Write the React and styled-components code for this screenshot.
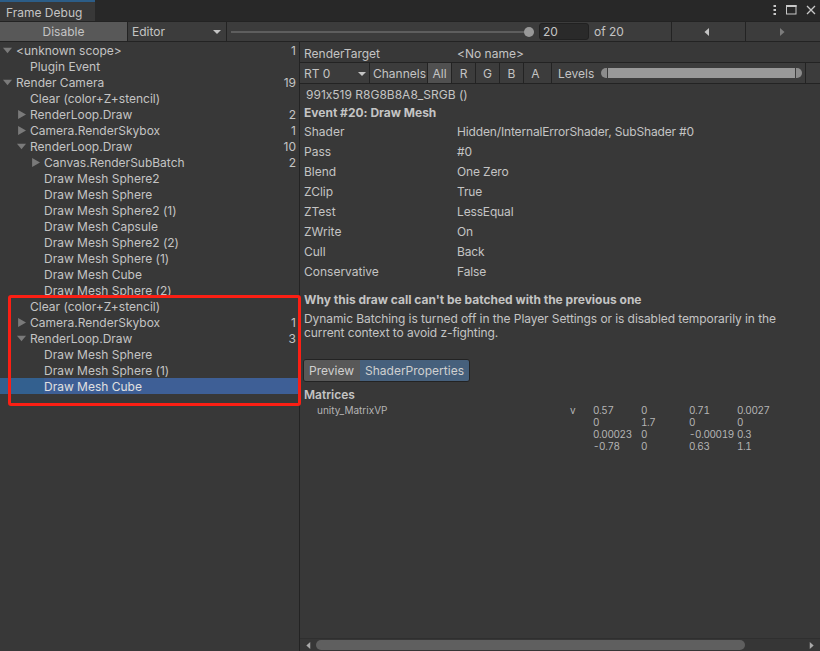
import React from "react";
import styled, { createGlobalStyle } from "styled-components";

const tree = [
  { label: "<unknown scope>", depth: 0, arrow: "down", count: 1 },
  { label: "Plugin Event", depth: 1 },
  { label: "Render Camera", depth: 0, arrow: "down", count: 19 },
  { label: "Clear (color+Z+stencil)", depth: 1 },
  { label: "RenderLoop.Draw", depth: 1, arrow: "right", count: 2 },
  { label: "Camera.RenderSkybox", depth: 1, arrow: "right", count: 1 },
  { label: "RenderLoop.Draw", depth: 1, arrow: "down", count: 10 },
  { label: "Canvas.RenderSubBatch", depth: 2, arrow: "right", count: 2 },
  { label: "Draw Mesh Sphere2", depth: 2 },
  { label: "Draw Mesh Sphere", depth: 2 },
  { label: "Draw Mesh Sphere2 (1)", depth: 2 },
  { label: "Draw Mesh Capsule", depth: 2 },
  { label: "Draw Mesh Sphere2 (2)", depth: 2 },
  { label: "Draw Mesh Sphere (1)", depth: 2 },
  { label: "Draw Mesh Cube", depth: 2 },
  { label: "Draw Mesh Sphere (2)", depth: 2 },
  { label: "Clear (color+Z+stencil)", depth: 1 },
  { label: "Camera.RenderSkybox", depth: 1, arrow: "right", count: 1 },
  { label: "RenderLoop.Draw", depth: 1, arrow: "down", count: 3 },
  { label: "Draw Mesh Sphere", depth: 2 },
  { label: "Draw Mesh Sphere (1)", depth: 2 },
  { label: "Draw Mesh Cube", depth: 2, selected: true },
];

const details = [
  ["Shader", "Hidden/InternalErrorShader, SubShader #0"],
  ["Pass", "#0"],
  ["Blend", "One Zero"],
  ["ZClip", "True"],
  ["ZTest", "LessEqual"],
  ["ZWrite", "On"],
  ["Cull", "Back"],
  ["Conservative", "False"],
];

const matrix = [
  ["0.57", "0", "0.71", "0.0027"],
  ["0", "1.7", "0", "0"],
  ["0.00023", "0", "-0.00019", "0.3"],
  ["-0.78", "0", "0.63", "1.1"],
];

const GlobalStyle = createGlobalStyle`
  html, body {
    margin: 0;
    background: #383838;
  }
  * {
    box-sizing: border-box;
  }
`;

const arrowShapes = {
  down: "0,1.5 8,1.5 4,6.5",
  right: "1,0 8,4 1,8",
  caret: "0,2 8,2 4,6",
  stepLeft: "6,0 1.5,4 6,8",
  stepRight: "2,0 6.5,4 2,8",
};

const Arrow = ({ dir, size = 8, color = "#7a7a7a" }) => (
  <svg width={size} height={size} viewBox="0 0 8 8">
    <polygon points={arrowShapes[dir]} fill={color} />
  </svg>
);

const App = () => {
  return (
    <>
      <GlobalStyle />
      <Window>
        <TabBar>
          <Tab>Frame Debug</Tab>
          <WindowIcons>
            <svg width="4" height="12" viewBox="0 0 4 12">
              <rect x="0.5" y="1" width="2.5" height="2" fill="#c8c8c8" />
              <rect x="0.5" y="5" width="2.5" height="2" fill="#c8c8c8" />
              <rect x="0.5" y="9" width="2.5" height="2" fill="#c8c8c8" />
            </svg>
            <svg width="11" height="10" viewBox="0 0 11 10">
              <rect x="0.5" y="0.5" width="9.5" height="8.5" fill="none" stroke="#c8c8c8" />
              <rect x="0" y="0" width="10.5" height="2" fill="#c8c8c8" />
            </svg>
            <svg width="10" height="10" viewBox="0 0 10 10">
              <path d="M1 1L9 9M9 1L1 9" stroke="#c8c8c8" strokeWidth="1.3" />
            </svg>
          </WindowIcons>
        </TabBar>

        <Toolbar>
          <DisableButton>Disable</DisableButton>
          <EditorSelect>
            Editor
            <Arrow dir="caret" color="#c4c4c4" />
          </EditorSelect>
          <FrameSlider>
            <FrameKnob />
          </FrameSlider>
          <FrameInput>20</FrameInput>
          <FrameTotal>of 20</FrameTotal>
          <StepButton>
            <Arrow dir="stepLeft" color="#c4c4c4" />
          </StepButton>
          <StepButton $last>
            <Arrow dir="stepRight" color="#7c7c7c" />
          </StepButton>
        </Toolbar>

        <Body>
          <TreePanel>
            {tree.map((row, i) => (
              <TreeRow key={i} $selected={row.selected}>
                <ArrowSlot $depth={row.depth}>
                  {row.arrow && <Arrow dir={row.arrow} size={9} />}
                </ArrowSlot>
                <TreeLabel>{row.label}</TreeLabel>
                {row.count && <TreeCount>{row.count}</TreeCount>}
              </TreeRow>
            ))}
            <Highlight />
          </TreePanel>

          <DetailPanel>
            <TargetRow>
              <TargetLabel>RenderTarget</TargetLabel>
              <span>&lt;No name&gt;</span>
            </TargetRow>
            <ChannelBar>
              <RtSelect>
                RT 0
                <Arrow dir="caret" color="#c4c4c4" />
              </RtSelect>
              <ChannelsLabel>Channels</ChannelsLabel>
              <ChannelButton $active>All</ChannelButton>
              <ChannelButton>R</ChannelButton>
              <ChannelButton>G</ChannelButton>
              <ChannelButton>B</ChannelButton>
              <ChannelButton $wide>A</ChannelButton>
              <LevelsLabel>Levels</LevelsLabel>
              <LevelsTrack>
                <LevelsCap $side="left" />
                <LevelsFill />
                <LevelsCap $side="right" />
              </LevelsTrack>
            </ChannelBar>

            <FormatLine>991x519 R8G8B8A8_SRGB ()</FormatLine>
            <EventTitle>Event #20: Draw Mesh</EventTitle>

            <DetailList>
              {details.map(([name, value]) => (
                <DetailRow key={name}>
                  <DetailName>{name}</DetailName>
                  <DetailValue>{value}</DetailValue>
                </DetailRow>
              ))}
            </DetailList>

            <ReasonTitle>Why this draw call can't be batched with the previous one</ReasonTitle>
            <ReasonText>
              Dynamic Batching is turned off in the Player Settings or is disabled temporarily in the
              <br />
              current context to avoid z-fighting.
            </ReasonText>

            <Tabs>
              <TabButton>Preview</TabButton>
              <TabButton $active>ShaderProperties</TabButton>
            </Tabs>

            <SectionTitle>Matrices</SectionTitle>
            <MatrixRow>
              <MatrixName>unity_MatrixVP</MatrixName>
              <MatrixStage>v</MatrixStage>
              <MatrixGrid>
                {matrix.flat().map((cell, i) => (
                  <span key={i}>{cell}</span>
                ))}
              </MatrixGrid>
            </MatrixRow>

            <Spacer />
            <ScrollBar>
              <Arrow dir="stepLeft" size={7} color="#a8a8a8" />
              <ScrollThumb />
              <Arrow dir="stepRight" size={7} color="#a8a8a8" />
            </ScrollBar>
          </DetailPanel>
        </Body>
      </Window>
    </>
  );
};

export default App;

const Window = styled.div`
  width: 820px;
  height: 651px;
  display: flex;
  flex-direction: column;
  overflow: hidden;
  background: #383838;
  color: #c4c4c4;
  font-family: Inter, "Liberation Sans", sans-serif;
  font-size: 12px;
  font-feature-settings: "calt" 0;
`;

const TabBar = styled.div`
  height: 21px;
  flex: none;
  display: flex;
  justify-content: space-between;
  background: #282828;
`;

const Tab = styled.div`
  width: 95px;
  height: 21px;
  padding: 3px 0 0 6px;
  background: #383838;
  border-top: 2px solid #2c5d87;
  line-height: 15px;
  color: #c4c4c4;
`;

const WindowIcons = styled.div`
  display: flex;
  align-items: center;
  gap: 9px;
  padding: 0 4px 1px 0;
`;

const Toolbar = styled.div`
  height: 21px;
  flex: none;
  display: flex;
  align-items: stretch;
  background: #3c3c3c;
  border-top: 1px solid #232323;
  border-bottom: 1px solid #232323;
`;

const DisableButton = styled.div`
  width: 128px;
  display: flex;
  align-items: center;
  justify-content: center;
  background: #585858;
  border-right: 1px solid #232323;
  color: #c4c4c4;
`;

const EditorSelect = styled.div`
  width: 99px;
  display: flex;
  align-items: center;
  justify-content: space-between;
  padding: 0 5px 0 4px;
  border-right: 1px solid #232323;
`;

const FrameSlider = styled.div`
  position: relative;
  width: 303px;
  margin-left: 4px;
  align-self: center;
  height: 2px;
  background: #5e5e5e;
`;

const FrameKnob = styled.div`
  position: absolute;
  left: 293px;
  top: -4px;
  width: 10px;
  height: 10px;
  border-radius: 50%;
  background: #999;
`;

const FrameInput = styled.div`
  width: 50px;
  height: 17px;
  align-self: center;
  margin-left: 5px;
  padding-left: 3px;
  line-height: 15px;
  background: #2a2a2a;
  border: 1px solid #212121;
  border-radius: 3px;
`;

const FrameTotal = styled.div`
  width: 83px;
  padding-left: 5px;
  line-height: 19px;
  border-right: 1px solid #232323;
`;

const StepButton = styled.div`
  width: 74px;
  display: flex;
  align-items: center;
  justify-content: center;
  padding-right: 3px;
  border-right: ${(p) => (p.$last ? "none" : "1px solid #232323")};
`;

const Body = styled.div`
  flex: 1;
  min-height: 0;
  display: flex;
`;

const TreePanel = styled.div`
  position: relative;
  width: 300px;
  flex: none;
  border-right: 1px solid #232323;
`;

const TreeRow = styled.div`
  height: 16px;
  display: flex;
  align-items: center;
  padding-right: 3px;
  background: ${(p) =>
    p.$selected ? "linear-gradient(to right, #33608f 44px, #3e5f96 44px)" : "transparent"};
  color: ${(p) => (p.$selected ? "#e0e0e0" : "#c4c4c4")};
`;

const ArrowSlot = styled.div`
  width: 14px;
  flex: none;
  margin-left: ${(p) => p.$depth * 14 + 2}px;
  padding-left: 1px;
  display: flex;
  align-items: center;
`;

const TreeLabel = styled.span`
  flex: 1;
  white-space: nowrap;
`;

const TreeCount = styled.span`
  flex: none;
`;

const Highlight = styled.div`
  position: absolute;
  left: 8px;
  top: 253px;
  width: 293px;
  height: 111px;
  border: 3px solid #fb1f14;
  border-radius: 3px;
  pointer-events: none;
`;

const DetailPanel = styled.div`
  flex: 1;
  min-width: 0;
  display: flex;
  flex-direction: column;
`;

const TargetRow = styled.div`
  height: 21px;
  flex: none;
  display: flex;
  align-items: center;
  padding: 3px 0 0 4px;
  border-bottom: 1px solid #232323;
`;

const TargetLabel = styled.span`
  width: 153px;
`;

const ChannelBar = styled.div`
  height: 21px;
  flex: none;
  display: flex;
  align-items: stretch;
  line-height: 21px;
  background: #3c3c3c;
  border-bottom: 1px solid #232323;
`;

const RtSelect = styled.div`
  width: 70px;
  display: flex;
  align-items: center;
  justify-content: space-between;
  padding: 1px 3px 0 4px;
  border-right: 1px solid #232323;
`;

const ChannelsLabel = styled.div`
  width: 57px;
  padding-left: 3px;
`;

const ChannelButton = styled.div`
  width: ${(p) => (p.$wide ? 28 : 24)}px;
  text-align: center;
  padding-right: ${(p) => (p.$wide ? 4 : 0)}px;
  background: ${(p) => (p.$active ? "#505050" : "transparent")};
  border-left: 1px solid #232323;
`;

const LevelsLabel = styled.div`
  width: 50px;
  padding-left: 6px;
  border-left: 1px solid #232323;
`;

const LevelsTrack = styled.div`
  width: 205px;
  display: flex;
  align-items: center;
  padding-right: 3px;
  border-right: 1px solid #232323;
`;

const LevelsCap = styled.div`
  width: 6px;
  height: 10px;
  background: #8c8c8c;
  border-radius: ${(p) => (p.$side === "left" ? "5px 0 0 5px" : "0 5px 5px 0")};
`;

const LevelsFill = styled.div`
  flex: 1;
  height: 10px;
  margin: 0 1px;
  background: #999;
`;

const FormatLine = styled.div`
  height: 20px;
  flex: none;
  padding: 3px 0 0 6px;
  line-height: 15px;
`;

const EventTitle = styled.div`
  height: 17px;
  flex: none;
  padding-left: 4px;
  line-height: 18px;
  font-weight: 700;
`;

const DetailList = styled.div`
  flex: none;
  padding-left: 4px;
`;

const DetailRow = styled.div`
  height: 20px;
  display: flex;
  align-items: center;
`;

const DetailName = styled.span`
  width: 153px;
  flex: none;
`;

const DetailValue = styled.span`
  letter-spacing: -0.15px;
`;

const ReasonTitle = styled.div`
  flex: none;
  margin-top: 11px;
  padding-left: 4px;
  line-height: 15px;
  font-weight: 700;
`;

const ReasonText = styled.div`
  flex: none;
  margin-top: 5px;
  padding-left: 4px;
  line-height: 14px;
  letter-spacing: -0.08px;
`;

const Tabs = styled.div`
  flex: none;
  display: flex;
  align-self: flex-start;
  height: 23px;
  margin: 19px 0 0 3px;
  border: 1px solid #232323;
  border-radius: 3px;
  overflow: hidden;
`;

const TabButton = styled.div`
  padding: ${(p) => (p.$active ? "0 5px" : "0 6px 0 5px")};
  line-height: 21px;
  background: ${(p) => (p.$active ? "#46607c" : "#585858")};
  color: #d0d0d0;
`;

const SectionTitle = styled.div`
  flex: none;
  margin-top: 5px;
  padding-left: 4px;
  line-height: 16px;
  font-weight: 600;
`;

const MatrixRow = styled.div`
  flex: none;
  display: flex;
  margin-top: 1px;
  padding-left: 17px;
  font-size: 10px;
  line-height: 12px;
  font-variant-numeric: tabular-nums;
  color: #b4b4b4;
`;

const MatrixName = styled.span`
  width: 253px;
  flex: none;
`;

const MatrixStage = styled.span`
  width: 23px;
  flex: none;
`;

const MatrixGrid = styled.div`
  display: grid;
  grid-template-columns: repeat(4, 48px);
  letter-spacing: -0.4px;
`;

const Spacer = styled.div`
  flex: 1;
`;

const ScrollBar = styled.div`
  height: 13px;
  flex: none;
  display: flex;
  align-items: center;
  padding: 0 5px;
  background: #363636;
  border-top: 1px solid #2f2f2f;
`;

const ScrollThumb = styled.div`
  width: 429px;
  height: 10px;
  margin: 0 auto 0 4px;
  border-radius: 5px;
  background: #5f5f5f;
`;
